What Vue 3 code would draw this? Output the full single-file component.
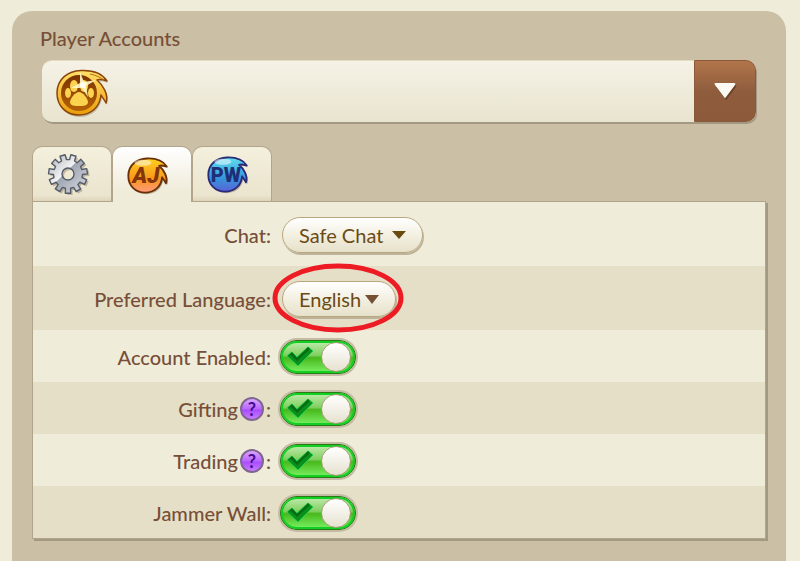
<template>
  <div class="page">
    <main class="card">
      <label class="title" for="account">Player Accounts</label>

      <div class="account">
        <select id="account" v-model="account" class="account-select">
          <option value="player"></option>
        </select>
        <svg class="account-icon" width="56" height="52" viewBox="0 0 56 52" aria-hidden="true">
          <defs>
            <linearGradient id="gold" x1="0" y1="0" x2="0" y2="1">
              <stop offset="0" stop-color="#ffe06a" />
              <stop offset="0.5" stop-color="#f8bf3c" />
              <stop offset="1" stop-color="#e89d08" />
            </linearGradient>
            <linearGradient id="coin" x1="0" y1="0" x2="0" y2="1">
              <stop offset="0" stop-color="#7a3300" />
              <stop offset="1" stop-color="#b66205" />
            </linearGradient>
          </defs>
          <path :d="badge" fill="#9a917b" opacity="0.5" transform="translate(1 2)" />
          <path :d="badge" fill="url(#gold)" stroke="#8b4308" stroke-width="1.5" stroke-linejoin="round" />
          <path d="M36 8C42 9 47 12 50 14" fill="none" stroke="#b46a0c" stroke-width="1" />
          <circle cx="25" cy="27" r="18" fill="url(#coin)" />
          <g fill="#fbd34f">
            <path d="M25 26C29 26 34 33 34 36C34 40 29 40 25 40C21 40 16 40 16 36C16 33 21 26 25 26Z" />
            <ellipse cx="20" cy="20" rx="4" ry="6" />
            <ellipse cx="30" cy="20" rx="4" ry="6" />
            <ellipse cx="14" cy="27" rx="3" ry="5" />
            <ellipse cx="37" cy="27" rx="3" ry="5" />
          </g>
          <path d="M26 6L30 16L42 14L32 20L34 31L28 22L17 22L26 17Z" fill="#fff8c8" opacity="0.9" />
          <circle cx="29" cy="19" r="3" fill="#fffef0" />
        </svg>
        <span class="account-arrow">
          <svg width="24" height="20" viewBox="0 0 24 20" aria-hidden="true">
            <path d="M3 4H22Q24 4 23 6L14 18Q13 20 12 18L3 6Z" fill="#5c3820" opacity="0.7" />
            <path d="M2 2H21Q23 2 22 4L13 16Q12 18 11 16L2 4Q1 2 2 2Z" fill="#fbfaf2" />
          </svg>
        </span>
      </div>

      <div class="tabs" role="tablist">
        <button
          v-for="tab in tabs"
          :key="tab.id"
          type="button"
          role="tab"
          class="tab"
          :class="{ active: activeTab === tab.id }"
          :aria-label="tab.name"
          :aria-selected="activeTab === tab.id"
          @click="activeTab = tab.id"
        >
          <svg v-if="tab.id === 'settings'" width="44" height="42" viewBox="0 0 44 42" aria-hidden="true">
            <defs>
              <linearGradient id="steel" x1="0" y1="0" x2="1" y2="1">
                <stop offset="0.1" stop-color="#b9bcc3" />
                <stop offset="0.44" stop-color="#f4f4f5" />
                <stop offset="0.46" stop-color="#a0a6b3" />
                <stop offset="0.8" stop-color="#c5c9d2" />
                <stop offset="1" stop-color="#8d94a3" />
              </linearGradient>
            </defs>
            <path :d="gear" fill="#a99f87" fill-rule="evenodd" opacity="0.7" transform="translate(2 2)" />
            <path :d="gear" fill="url(#steel)" fill-rule="evenodd" stroke="#555b68" stroke-width="1.4" stroke-linejoin="round" />
          </svg>
          <svg v-else width="43" height="40" viewBox="0 0 56 52" aria-hidden="true">
            <defs>
              <linearGradient :id="tab.id" x1="0" y1="0" x2="0" y2="1">
                <stop offset="0" :stop-color="tab.top" />
                <stop offset="0.6" :stop-color="tab.mid" />
                <stop offset="1" :stop-color="tab.bottom" />
              </linearGradient>
            </defs>
            <path :d="badge" fill="#9a917b" opacity="0.6" transform="translate(2 2)" />
            <path :d="badge" :fill="`url(#${tab.id})`" :stroke="tab.line" stroke-width="2.4" stroke-linejoin="round" />
            <ellipse cx="22" cy="10" rx="11" ry="4" fill="#fff" opacity="0.5" />
            <text class="logo" :class="tab.id" x="26" y="36" text-anchor="middle" :fill="tab.ink">{{ tab.name }}</text>
          </svg>
        </button>
      </div>

      <section class="settings" role="tabpanel">
        <div class="row tall">
          <label class="label" for="chat">Chat:</label>
          <div class="field">
            <select id="chat" v-model="chat" class="pill pill-chat">
              <option>Safe Chat</option>
            </select>
            <svg class="pill-arrow" width="16" height="10" viewBox="0 0 16 10" aria-hidden="true">
              <path d="M1 1H15L8 9Z" fill="#6b4a12" />
            </svg>
          </div>
        </div>

        <div class="row tall">
          <label class="label" for="language">Preferred Language:</label>
          <div class="field">
            <select id="language" v-model="language" class="pill pill-language">
              <option>English</option>
            </select>
            <svg class="pill-arrow" width="16" height="10" viewBox="0 0 16 10" aria-hidden="true">
              <path d="M1 1H15L8 10Z" fill="#774f34" />
            </svg>
            <svg class="ring" width="132" height="70" viewBox="0 0 132 70" aria-hidden="true">
              <ellipse cx="66" cy="35" rx="63" ry="32" fill="none" stroke="#ed1c24" stroke-width="5" />
            </svg>
          </div>
        </div>

        <div v-for="item in toggles" :key="item.id" class="row">
          <div class="label">
            <label :for="item.id">{{ item.name }}</label>
            <button v-if="item.help" type="button" class="help" :aria-label="`About ${item.name}`">?</button>
            <span>:</span>
          </div>
          <div class="toggle">
            <input :id="item.id" v-model="item.on" type="checkbox" class="switch" />
            <svg v-if="item.on" class="check" width="28" height="22" viewBox="0 0 28 22" aria-hidden="true">
              <path d="M1 10L6 6L11 11L22 1L27 5L12 20Z" fill="#0b8f1b" stroke="#1fd052" stroke-width="1" />
              <path d="M2 10L6 6L11 12L22 1L24 3L11 15L5 9Z" fill="#056d12" />
            </svg>
          </div>
        </div>
      </section>
    </main>
  </div>
</template>

<script setup>
import { ref } from 'vue'

const account = ref('player')
const activeTab = ref('aj')
const chat = ref('Safe Chat')
const language = ref('English')

const tabs = [
  { id: 'settings', name: 'Settings' },
  { id: 'aj', name: 'AJ', top: '#ffd21f', mid: '#f9961c', bottom: '#ff9a80', line: '#6b2f08', ink: '#84350b' },
  { id: 'pw', name: 'PW', top: '#5fe0ee', mid: '#3596dc', bottom: '#5a62d8', line: '#2b2a78', ink: '#1f2f77' }
]

const toggles = ref([
  { id: 'enabled', name: 'Account Enabled', help: false, on: true },
  { id: 'gifting', name: 'Gifting', help: true, on: true },
  { id: 'trading', name: 'Trading', help: true, on: true },
  { id: 'wall', name: 'Jammer Wall', help: false, on: true }
])

// Round badge with two wisps, shared by the three logos
const badge = 'M25 49C12 49 3 40 3 27C3 13 14 5 27 4.5C38 4 48 7 53 15C50 14 46 13 43 14C49 19 55 29 52 37C50 33 48 31 47 29C46 41 37 49 25 49Z'

const gearPath = (cx, cy, teeth) => {
  const step = (Math.PI * 2) / teeth
  const point = (r, a) => `${(cx + r * Math.cos(a)).toFixed(2)} ${(cy + r * Math.sin(a)).toFixed(2)}`
  const points = []
  for (let i = 0; i < teeth; i++) {
    const a = (i + 0.5) * step - Math.PI / 2
    points.push(point(14.5, a - step * 0.31), point(19.5, a - step * 0.24), point(19.5, a + step * 0.24), point(14.5, a + step * 0.31))
  }
  return `M${points.join('L')}ZM${cx - 6} ${cy}a6 6 0 1 0 12 0a6 6 0 1 0 -12 0Z`
}
const gear = gearPath(22, 21, 11)
</script>

<style>
body {
  background: #f0ecda;
}
</style>

<style scoped>
* {
  box-sizing: border-box;
}

.page {
  display: flex;
  flex-direction: column;
  min-height: 100vh;
  padding: 11px 14px 0 12px;
  background: #f0ecda;
  color: #774f38;
  font-family: Lato, "Liberation Sans", sans-serif;
  font-size: 20px;
  font-weight: 500;
  line-height: 24px;
}

.card {
  flex: 1;
  padding: 15px 20px 20px;
  background: #cbbfa5;
  border-radius: 20px 20px 0 0;
}

.title {
  display: block;
  margin: 0 8px 10px;
}

/* Account picker */
.account {
  position: relative;
  margin: 0 10px 24px;
}

.account-select {
  display: block;
  width: 100%;
  height: 62px;
  appearance: none;
  border: 0;
  border-top: 1px solid #e4dcc2;
  border-radius: 10px;
  background: linear-gradient(#f5f2e6, #e9e4cf);
  box-shadow: 1px 2px 0 #a39881;
  cursor: pointer;
}

.account-icon {
  position: absolute;
  left: 12px;
  top: 6px;
  pointer-events: none;
}

.account-arrow {
  position: absolute;
  top: 0;
  right: 0;
  display: flex;
  align-items: center;
  justify-content: center;
  width: 62px;
  height: 62px;
  border: 1px solid #8b5939;
  border-radius: 0 10px 10px 0;
  background: linear-gradient(#b1754b, #8f5d3d 50%, #8c5a3b);
  pointer-events: none;
}

/* Tabs */
.tabs {
  display: flex;
}

.tab {
  display: flex;
  align-items: center;
  width: 80px;
  height: 55px;
  padding: 0 0 0 13px;
  border: 1px solid #b3a58b;
  border-bottom: 0;
  border-radius: 10px 10px 0 0;
  background: linear-gradient(#f3f0dd, #ebe4ce 90%, #ded4bb);
  cursor: pointer;
}

.tab.active {
  position: relative;
  height: 56px;
  margin-bottom: -1px;
  background: linear-gradient(#ffffff, #f0ecda 80%);
}

.logo {
  font-family: Roboto, sans-serif;
  font-size: 26px;
  font-weight: 900;
}

.logo.aj {
  font-size: 29px;
  font-style: italic;
}

/* Settings list */
.settings {
  border: 1px solid #b0a48b;
  box-shadow: 2px 2px 0 #a39881;
}

.row {
  display: grid;
  grid-template-columns: 238px 1fr;
  column-gap: 9px;
  align-items: center;
  min-height: 52px;
  padding-top: 2px;
  background: #f0ecda;
}

.row:nth-child(even) {
  background: #e6dfc7;
}

.row.tall {
  min-height: 64px;
}

.label {
  display: flex;
  align-items: center;
  justify-content: flex-end;
  text-align: right;
}

.field {
  position: relative;
  justify-self: start;
  margin: 0 2px;
}

.pill {
  display: block;
  height: 36px;
  padding: 0 0 0 16px;
  appearance: none;
  border: 1px solid #b9a67c;
  border-radius: 18px;
  background: linear-gradient(#ffffff, #f3f0e2 50%, #e6e1ca);
  box-shadow: 1px 2px 0 #bdb399;
  color: #6b4a15;
  font: inherit;
  font-weight: 400;
  cursor: pointer;
}

.pill-chat {
  width: 141px;
}

.pill-language {
  width: 114px;
}

.pill-arrow {
  position: absolute;
  top: 13px;
  right: 16px;
  pointer-events: none;
}

.ring {
  position: absolute;
  top: -18px;
  left: -10px;
  pointer-events: none;
}

.help {
  width: 24px;
  height: 24px;
  margin: 0 2px;
  padding: 0;
  border: 2px solid #80668f;
  border-radius: 50%;
  background: linear-gradient(#d9a5ff, #b866ff 50%, #a94cff 55%, #c67cff);
  color: #4a0a94;
  font: 700 18px/20px Lato, sans-serif;
  text-align: center;
  cursor: pointer;
}

.toggle {
  position: relative;
  justify-self: start;
}

.switch {
  display: flex;
  align-items: center;
  justify-content: flex-start;
  width: 76px;
  height: 34px;
  margin: 0;
  padding: 0 4px;
  appearance: none;
  border: 1px solid #2c7a16;
  border-radius: 17px;
  background: #b9b29c;
  box-shadow: 0 0 0 2px #c5bba4;
  cursor: pointer;
}

.switch::before {
  content: '';
  width: 28px;
  height: 28px;
  border: 1px solid #a89d78;
  border-radius: 50%;
  background: linear-gradient(#ffffff, #e6e2d0);
}

.switch:checked {
  justify-content: flex-end;
  background: linear-gradient(#c3ecb0, #7fd05f 45%, #48b81c 52%, #7bf266);
  box-shadow: 0 0 0 2px #c5bba4, inset 0 0 0 2px #12d023;
}

.check {
  position: absolute;
  top: 6px;
  left: 6px;
  pointer-events: none;
}
</style>
